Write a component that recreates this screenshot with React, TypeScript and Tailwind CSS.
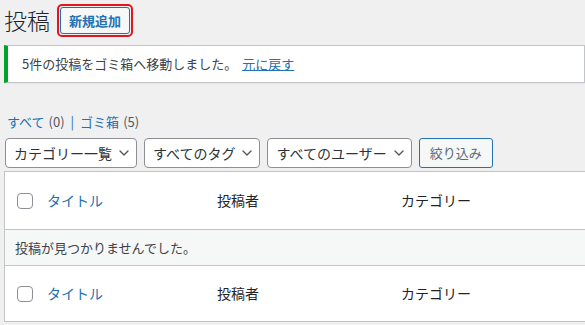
import { ChevronDown } from 'lucide-react';

const FONT = "font-['Segoe_UI','Noto_Sans_CJK_JP',sans-serif]";

const FILTERS = ['カテゴリー一覧', 'すべてのタグ', 'すべてのユーザー'];

function Select({ label }: { label: string }) {
  return (
    <div className="flex h-[30px] items-center gap-[4px] rounded-[4px] border border-[#8c8f94] bg-white pl-[8px] pr-[4px] text-[14px] text-[#2c3338]">
      <span>{label}</span>
      <ChevronDown size={16} strokeWidth={2} className="text-[#50575e]" />
    </div>
  );
}

function HeadRow({ h }: { h: string }) {
  return (
    <div className={`flex ${h} items-center bg-white text-[14px]`}>
      <div className="ml-[12px] h-[16px] w-[16px] rounded-[4px] border border-[#8c8f94] bg-white" />
      <span className="ml-[14px] w-[170px] text-[#2271b1]">タイトル</span>
      <span className="w-[184px] text-[#1d2327]">投稿者</span>
      <span className="text-[#1d2327]">カテゴリー</span>
    </div>
  );
}

export default function App() {
  return (
    <div className={`h-[325px] w-[585px] overflow-hidden bg-[#f0f0f1] pl-[4px] ${FONT}`}>
      {/* ヘッダー */}
      <div className="flex h-[41px] items-center">
        <h1 className="text-[23px] font-light leading-none text-[#1d2327]">投稿</h1>
        <div className="ml-[7px] rounded-[5px] border-[2px] border-[#e5161b] p-[1px]">
          <button
            type="button"
            className="flex h-[27px] items-center rounded-[3px] border border-[#2271b1] bg-[#f6f7f7] px-[8px] text-[13px] font-semibold text-[#2271b1]"
          >
            新規追加
          </button>
        </div>
      </div>

      {/* 通知 */}
      <div className="mt-[4px] flex h-[38px] items-center border border-l-[4px] border-[#c3c4c7] border-l-[#00a32a] bg-white pl-[14px] text-[13px] text-[#3c434a] shadow-[0_1px_1px_rgba(0,0,0,0.04)]">
        <span>5件の投稿をゴミ箱へ移動しました。</span>
        <a className="ml-[5px] text-[#2271b1] underline">元に戻す</a>
      </div>

      {/* ステータス */}
      <div className="mt-[30px] flex items-center pl-[3px] text-[13px] leading-[18px]">
        <a className="text-[#2271b1]">すべて</a>
        <span className="ml-[4px] text-[#50575e]">(0)</span>
        <span className="mx-[6px] text-[#2271b1]">|</span>
        <a className="text-[#2271b1]">ゴミ箱</a>
        <span className="ml-[4px] text-[#50575e]">(5)</span>
      </div>

      {/* フィルター */}
      <div className="mt-[7px] flex items-center gap-[7px] pl-[1px]">
        {FILTERS.map(f => (
          <Select key={f} label={f} />
        ))}
        <button
          type="button"
          className="h-[30px] rounded-[3px] border border-[#2271b1] bg-[#f6f7f7] px-[10px] text-[13px] text-[#5c6a7c]"
        >
          絞り込み
        </button>
      </div>

      {/* テーブル */}
      <div className="mt-[3px] border border-r-0 border-[#c3c4c7]">
        <HeadRow h="h-[57px]" />
        <div className="flex h-[37px] items-center border-y border-[#c3c4c7] bg-[#f6f7f7] pl-[10px] text-[13px] text-[#3c434a]">
          投稿が見つかりませんでした。
        </div>
        <HeadRow h="h-[55px]" />
      </div>
    </div>
  );
}
